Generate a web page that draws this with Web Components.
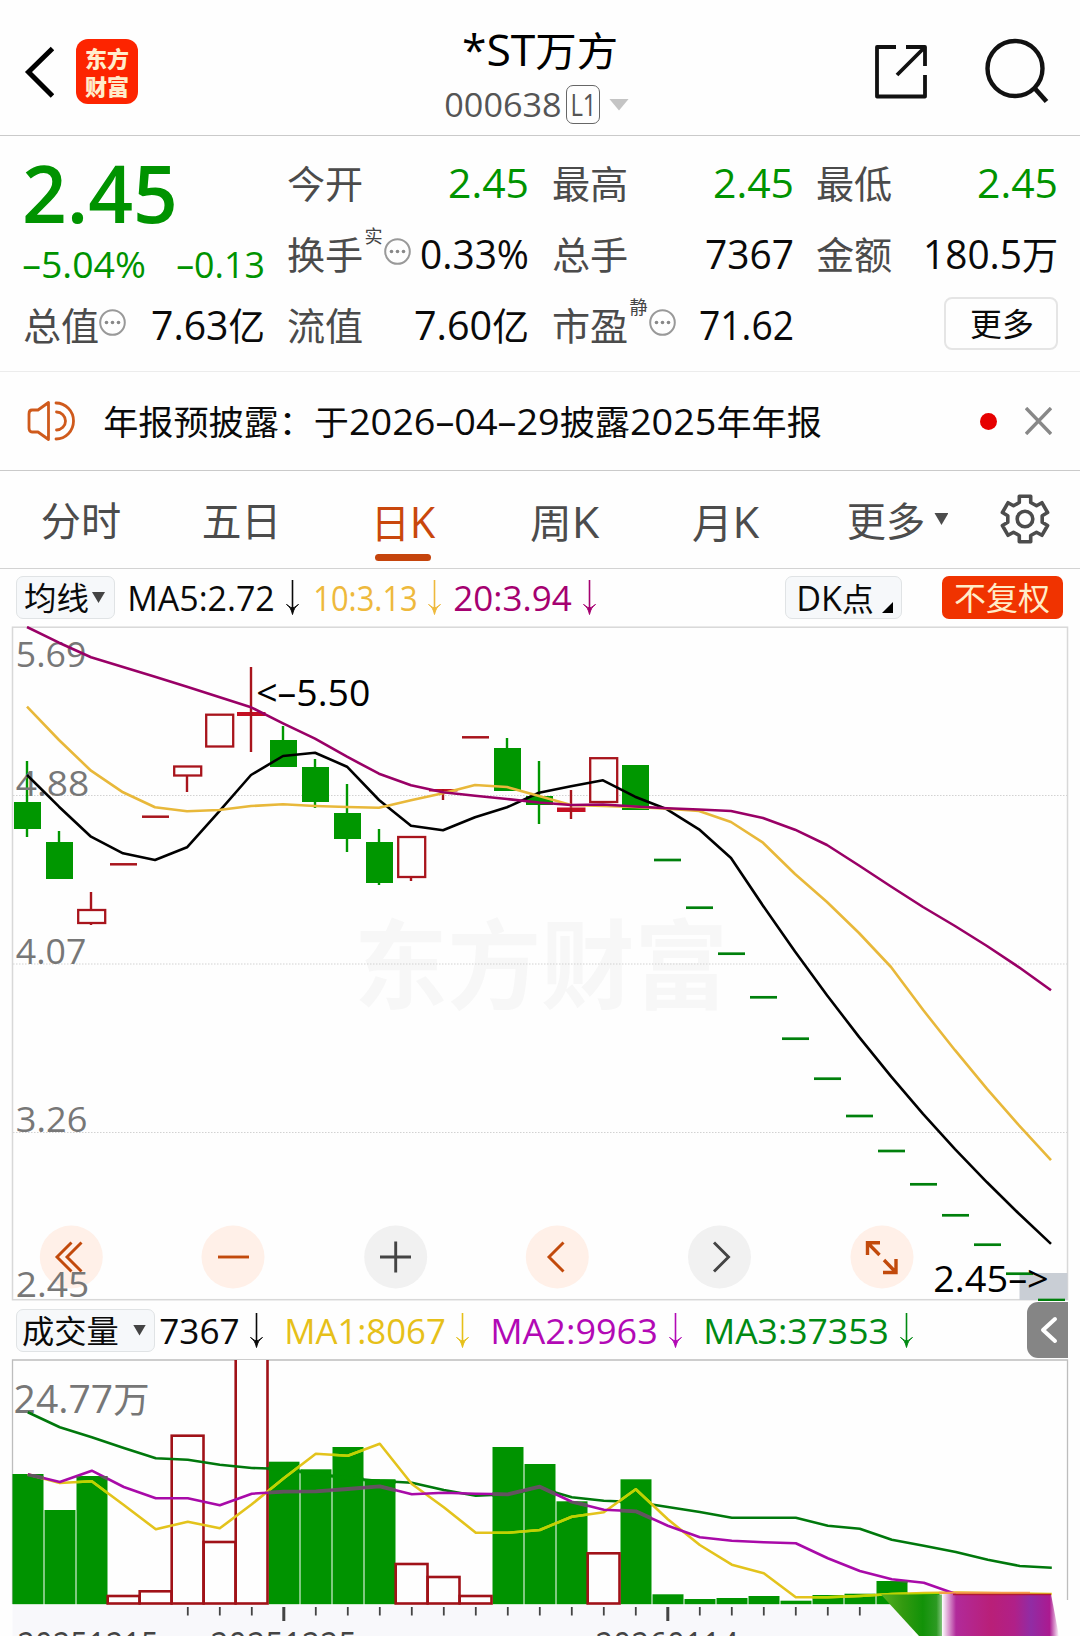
<!DOCTYPE html>
<html lang="zh-CN">
<head>
<meta charset="utf-8">
<title>*ST万方 000638</title>
<style>
html,body{margin:0;padding:0;background:#fefefe}
body{width:1080px;height:1636px;overflow:hidden;font-family:"Open Sans","Noto Sans CJK SC",sans-serif;color:#0a0a0a}
</style>
</head>
<body>
<stock-page></stock-page>
<script>
const FONT = '"Open Sans","Noto Sans CJK SC",sans-serif';
const define = (name, css, html) => customElements.define(name, class extends HTMLElement {
  constructor() {
    super();
    this.attachShadow({mode: 'open'}).innerHTML = `<style>${css}</style>` + (typeof html === 'function' ? html(this) : html);
  }
});

/* Single-line label: box is the cap height, ink is fitted to the width in w. */
const line = (str, x, base, w, s, extra = '', cjk = .93) => {
  const hasLatin = /[\x20-\x7e–]/.test(str);
  const body = hasLatin
    ? str.replace(/&/g, '&amp;').replace(/</g, '&lt;').replace(/[\u4e00-\u9fff：]+/g, m => `<tspan font-size="${(s * cjk).toFixed(1)}">${m}</tspan>`)
    : str;
  const b = hasLatin ? .05 * s : .03 * s;
  return `<text x="${(x - b).toFixed(1)}" y="${base}" font-size="${s}" textLength="${(w + 2 * b).toFixed(1)}" lengthAdjust="spacingAndGlyphs" ${extra}>${body}</text>`;
};
customElements.define('x-text', class extends HTMLElement {
  connectedCallback() {
    if (this.shadowRoot) return;
    const s = +this.getAttribute('s'), w = +this.getAttribute('w'), h = Math.round(s * .72);
    this.attachShadow({mode: 'open'}).innerHTML =
      `<style>:host{display:block;flex:none;width:${w}px;height:${h}px}svg{display:block;overflow:visible}text{font-family:${FONT};fill:currentColor}</style>
       <svg width="${w}" height="${h}">${line(this.getAttribute('t'), 0, h, w, s)}</svg>`;
  }
});

define('info-dot', ':host{display:block;flex:none;width:27px;height:27px}svg{display:block}',
  `<svg width="27" height="27" fill="none" stroke="#999" stroke-width="2"><circle cx="13.5" cy="13.5" r="12.3"/><g fill="#888" stroke="none"><circle cx="7.5" cy="13.5" r="1.8"/><circle cx="13.5" cy="13.5" r="1.8"/><circle cx="19.5" cy="13.5" r="1.8"/></g></svg>`);

define('down-arrow', ':host{display:block;flex:none;width:13px;height:35px}svg{display:block;overflow:visible}',
  `<svg width="13" height="35"><path d="M6.5 0V32" fill="none" stroke="currentColor" stroke-width="1.6"/><path d="M.5 24.5Q5 27 6.5 34.5Q8 27 12.5 24.5Q8 28 6.5 28Q5 28 .5 24.5Z" fill="currentColor" stroke="currentColor"/></svg>`);

define('caret-down', ':host{display:block;flex:none;width:var(--w,13px);height:var(--h,11px);background:currentColor;clip-path:polygon(0 0,100% 0,50% 100%)}', '');

define('app-header', `
:host{display:flex;height:135px;border-bottom:1px solid #cacaca;align-items:flex-start}
.back{margin:45px 0 0 23px}.logo{margin:39px 0 0 22px;width:62px;height:65px;border-radius:12px;background:#fd2400;color:#ffeccb;display:flex;flex-direction:column;align-items:center;font:900 22px/28px "Noto Sans CJK SC",sans-serif;padding-top:4px;box-sizing:border-box}
.mid{margin-left:308px;width:186px}
.title{margin:35px 0 0 18px;color:#000}.code{display:flex;align-items:center;margin-top:19px;color:#555;height:39px}
.l1{margin-left:6px;width:34px;height:39px;box-sizing:border-box;border:1.5px solid #666;border-radius:7px;display:flex;align-items:center;justify-content:center}
caret-down{--w:20px;--h:12px;color:#c4c4c4;margin-left:9px}
.share{margin:43px 0 0 241px}.search{margin:38px 0 0 55px}svg{display:block;flex:none}`,
`<svg class="back" width="31" height="54" fill="none" stroke="#000" stroke-width="5" stroke-linecap="butt" stroke-linejoin="miter"><path d="M29.500 3.500L5.500 27L29.500 51"/></svg>
<div class="logo"><span>东方</span><span>财富</span></div>
<div class="mid"><x-text class="title" t="*ST万方" s="43" w="152"></x-text>
<div class="code"><x-text t="000638" s="33" w="114"></x-text><span class="l1"><x-text t="L1" s="31" w="23"></x-text></span><caret-down></caret-down></div></div>
<svg class="share" width="56" height="58" fill="none" stroke="#111" stroke-width="3.8" stroke-linejoin="round"><path d="M23 4H4V53.500H52V32M33 4H52V23M51 5L24 32"/></svg>
<svg class="search" width="66" height="68" fill="none" stroke="#111" stroke-width="4.400"><circle cx="31" cy="30.5" r="27.5"/><path d="M50 49.500L62.500 63.500" stroke-width="4.800"/></svg>`);

customElements.define('quote-cell', class extends HTMLElement {
  connectedCallback() {
    if (this.shadowRoot) return;
    const a = n => this.getAttribute(n);
    this.attachShadow({mode: 'open'}).innerHTML = `<style>
      :host{display:flex;align-items:flex-end;height:29px}.l{color:#4b4b4b}.v{margin-left:auto}
      .sup{color:#444;margin:0 1px 26px 3px}info-dot{margin:0 0 4px 1px}</style>
      <x-text class="l" t="${a('label')}" s="38" w="74"></x-text>
      ${a('sup') ? `<x-text class="sup" t="${a('sup')}" s="18" w="17"></x-text>` : ''}${this.hasAttribute('info') ? '<info-dot></info-dot>' : ''}
      <x-text class="v" t="${a('v')}" s="40.5" w="${a('w')}"></x-text>`;
  }
});

define('quote-panel', `
:host{display:grid;box-sizing:border-box;height:236px;border-bottom:1px solid #ececec;padding:33px 23px 0 23.5px;grid-template-columns:repeat(4,239px);column-gap:25.6px;grid-template-rows:29px 29px 29px;row-gap:42px}
.price{grid-row:1/3;color:#009300}.big{margin:-3px 0 0 2px;font-weight:600}.chg{display:flex;justify-content:space-between;margin-top:29px}
.g{color:#009300}
.more{justify-self:end;width:114px;height:53px;box-sizing:border-box;border:2px solid #e5e5e5;border-radius:8px;display:flex;align-items:center;justify-content:center;margin:-14px -2px 0 0;padding:2px 0 0 2px}`,
`<div class="price"><x-text class="big" t="2.45" s="79" w="148"></x-text><div class="chg"><x-text t="–5.04%" s="36.5" w="120"></x-text><x-text t="–0.13" s="36.5" w="85"></x-text></div></div>
<quote-cell class="g" label="今开" v="2.45" w="77"></quote-cell><quote-cell class="g" label="最高" v="2.45" w="77"></quote-cell><quote-cell class="g" label="最低" v="2.45" w="77"></quote-cell>
<quote-cell label="换手" sup="实" info v="0.33%" w="105"></quote-cell><quote-cell label="总手" v="7367" w="85"></quote-cell><quote-cell label="金额" v="180.5万" w="131"></quote-cell>
<quote-cell label="总值" info v="7.63亿" w="110"></quote-cell><quote-cell label="流值" v="7.60亿" w="111"></quote-cell><quote-cell label="市盈" sup="静" info v="71.62" w="91"></quote-cell>
<div class="more"><x-text t="更多" s="32" w="62"></x-text></div>`);

define('notice-bar', `
:host{display:flex;align-items:center;box-sizing:border-box;height:99px;border-bottom:1px solid #cacaca;padding:0 28px 0 27px}
x-text{margin:2px 0 0 30px}.dot{margin:0 28px 0 auto;width:17px;height:17px;border-radius:50%;background:#e60000}svg{display:block}`,
`<svg width="48" height="42" fill="none" stroke="#cf5a1c" stroke-width="2.8" stroke-linejoin="round" stroke-linecap="round"><path d="M21.500 2.500V39.500L11 32H5Q2 32 2 28V14Q2 10 5 10H11ZM29 3A17.500 18 0 0 1 29 39M29.500 12A9 9 0 0 1 29.500 30"/></svg>
<x-text t="年报预披露：于2026–04–29披露2025年年报" s="36.5" w="715"></x-text>
<span class="dot"></span><svg width="27" height="28" stroke="#888" stroke-width="3.4"><path d="M1 1L26 27M26 1L1 27"/></svg>`);

const gear = (() => {
  const p = [];
  for (let k = 0; k < 6; k++) for (const [d, r] of [[-19, 17.5], [-14, 23.5], [14, 23.5], [19, 17.5]]) {
    const t = (-90 + 60 * k + d) * Math.PI / 180;
    p.push((26 + r * Math.cos(t)).toFixed(1) + ',' + (26 + r * Math.sin(t)).toFixed(1));
  }
  return p.join(' ');
})();
define('period-tabs', `
:host{display:flex;box-sizing:border-box;height:98px;border-bottom:1px solid #d3d3d3;color:#4c4c4c}
.tab{width:161.3px;flex:none;display:flex;flex-direction:column;align-items:center;padding-top:36px;box-sizing:border-box}
.tab:first-child{margin-left:-2px}.on{color:#c9470c}.on i{width:56px;height:6.5px;border-radius:4px;background:#c5440c;margin-top:16px}
.more{flex-direction:row;align-items:flex-start;justify-content:flex-start;padding-left:42px}caret-down{--w:14px;--h:12px;margin:6px 0 0 10px}
svg{display:block;margin:22px 0 0 31px}`,
`<div class="tab"><x-text t="分时" s="40" w="78"></x-text></div><div class="tab"><x-text t="五日" s="40" w="77"></x-text></div>
<div class="tab on"><x-text t="日K" s="43" w="60"></x-text><i></i></div><div class="tab"><x-text t="周K" s="43" w="65"></x-text></div>
<div class="tab"><x-text t="月K" s="43" w="63"></x-text></div><div class="tab more"><x-text t="更多" s="40" w="76"></x-text><caret-down></caret-down></div>
<svg width="52" height="52" fill="none" stroke="#4c4c4c" stroke-width="3.6" stroke-linejoin="round"><polygon points="${gear}"/><circle cx="26" cy="26" r="7.800"/></svg>`);

const chip = `.chip{box-sizing:border-box;height:43px;background:#f6f8fa;border:1.5px solid #e0e3e5;border-radius:7px;display:flex;align-items:center;flex:none}caret-down{color:#444}x-text{position:relative;top:1px}`;
define('ma-legend', `
:host{display:flex;align-items:center;height:57px;box-sizing:border-box;padding:0 16px}${chip}
.avg{width:99px;padding-left:8px}.avg caret-down{margin-left:4px}.y{color:#eeb93c}.p{color:#a50070}
.dk{width:117px;margin-left:189px;padding-left:12px}.dk i{align-self:flex-end;width:11px;height:11px;background:#000;clip-path:polygon(100% 0,100% 100%,0 100%);margin:0 0 5px 10px}
.adj{margin-left:39.500px;width:121px;height:43px;border-radius:7px;background:#f03300;color:#ffecc8;display:flex;align-items:center;justify-content:center}`,
`<div class="chip avg"><x-text t="均线" s="32" w="63"></x-text><caret-down></caret-down></div>
<x-text style="margin-left:14px" t="MA5:2.72" s="34" w="144"></x-text><down-arrow style="margin-left:13px"></down-arrow>
<x-text class="y" style="margin-left:16px" t="10:3.13" s="34" w="101"></x-text><down-arrow class="y" style="margin-left:12px"></down-arrow>
<x-text class="p" style="margin-left:14px" t="20:3.94" s="34" w="115"></x-text><down-arrow class="p" style="margin-left:13px"></down-arrow>
<div class="chip dk"><x-text t="DK点" s="34" w="74"></x-text><i></i></div><div class="adj"><x-text t="不复权" s="32" w="94"></x-text></div>`);

define('volume-legend', `
:host{display:flex;align-items:center;height:58px;box-sizing:border-box;padding-left:16px}${chip}
.vol{width:139px;padding-left:6px}.vol caret-down{margin-left:15px}.y{color:#e6c019}.p{color:#b209b5}.g{color:#008a12}
.fold{margin-left:114px;width:40.500px;height:56px;border-radius:11px 0 0 11px;background:#858585;display:flex;align-items:center;justify-content:center;padding-left:3px;box-sizing:border-box}`,
`<div class="chip vol"><x-text t="成交量" s="32" w="95"></x-text><caret-down></caret-down></div>
<x-text style="margin-left:6px" t="7367" s="35.5" w="77"></x-text><down-arrow style="margin-left:12px"></down-arrow>
<x-text class="y" style="margin-left:23px" t="MA1:8067" s="35.5" w="158"></x-text><down-arrow class="y" style="margin-left:12px"></down-arrow>
<x-text class="p" style="margin-left:23px" t="MA2:9963" s="35.5" w="164"></x-text><down-arrow class="p" style="margin-left:13px"></down-arrow>
<x-text class="g" style="margin-left:23px" t="MA3:37353" s="35.5" w="182"></x-text><down-arrow class="g" style="margin-left:13px"></down-arrow>
<div class="fold"><svg width="18" height="28" fill="none" stroke="#fff" stroke-width="4" stroke-linecap="round" stroke-linejoin="round"><path d="M15 3L3 14L15 25"/></svg></div>`);

const X = i => 27 + 32 * i;
const poly = (ys, color, extra = '', dx = 0) => `<polyline points="${ys.map((y, i) => X(i) + dx + ',' + y).join(' ')}" fill="none" stroke="${color}" stroke-width="2.6" stroke-linejoin="round" ${extra}/>`;

define('k-chart', `:host{display:block;height:675px}svg{display:block}text{font-family:${FONT}}`, () => {
  const G = '#009700', R = '#a8141c';
  /* kind, body top, body bottom, wick top, wick bottom */
  const c = [['g',802,829,761,837],['g',842,879,831],['r',910,923,892,925],['d',864.3],['d',816.7],['r',766.5,775.5,0,792],['r',714.7,746.5],['x',712,716,667,752],
    ['g',740,767,726],['g',767,802,759,808],['g',813,839,784,852],['g',842,883,829,885],['r',837,877,0,881],['x',789,791.5,0,800],['d',737.3],['g',748,791,738],
    ['g',796,805,761,824],['x',807.5,812,790,819],['r',758.2,802],['g',765,810]];
  let s = '';
  c.forEach(([k, t, b, wt, wb], i) => {
    const x = X(i), col = k === 'g' ? G : R;
    if (wt) s += `<path d="M${x} ${wt}V${t}" stroke="${col}" stroke-width="2.400"/>`;
    if (wb) s += `<path d="M${x} ${b}V${wb}" stroke="${col}" stroke-width="2.400"/>`;
    if (k === 'g') s += `<rect x="${x - 13}" y="${t}" width="27" height="${b - t}" fill="${G}"/>`;
    if (k === 'r') s += `<rect x="${x - 12.800}" y="${t}" width="27" height="${b - t}" fill="#fefefe" stroke="${R}" stroke-width="2.300"/>`;
    if (k === 'x') s += `<rect x="${x - 14}" y="${t}" width="28.500" height="${b - t}" fill="#c40f22"/><path d="M${x} ${t}V${b}" stroke="${R}" stroke-width="2.400"/>`;
    if (k === 'd') s += `<path d="M${x - 13} ${t}h27" stroke="${R}" stroke-width="2.500"/>`;
  });
  const dash = [860,907.7,953.7,997.3,1038.7,1078.7,1116,1151,1184.3,1215.3,1244.7,1273.7,1300].map((y, i) => `<path d="M${X(20 + i) - 13} ${y}h27" stroke="#00800c" stroke-width="2.700"/>`).join('');
  const ma5 = [775,806.7,836.7,853.3,860,847.3,811.7,775,756,752.7,766.7,800,825.7,830.3,817.3,807.3,792.7,786.3,780.3,796.7,809.3,829.3,858,905.7,951.5,995.2,1036.9,1076.4,1113.8,1149.1,1182.3,1213.8,1243.9];
  const ma10 = [706.7,740,770.7,792.3,807.3,811.3,810,806,804.3,806,807,807.7,800.3,793.3,785,787,796,805,806,807,808.7,811,822,842.7,874,902,933,967,1009.8,1050.2,1088.8,1125.3,1160.2];
  const ma20 = [627,642.7,657.3,667,676.7,686.7,697,707.3,723.3,738.7,756.7,773.7,785.3,792.3,795.7,799,802.5,805,804.5,806.5,808.3,809.5,811,818,829.7,845,865.5,886.5,907,926,946,967.3,990.3];
  const circ = [['#fff0e8',71.3],['#fff0e8',233],['#f1f1f1',395.7],['#fff0e8',557.3],['#f1f1f1',719.5],['#fff0e8',882]].map(([f, x]) => `<circle cx="${x}" cy="1257" r="31.500" fill="${f}"/>`).join('');
  return `<svg width="1080" height="675" viewBox="0 626 1080 675">
  <text x="354" y="1001" font-size="97" font-weight="700" fill="#f7f7f7" textLength="374" lengthAdjust="spacingAndGlyphs">东方财富</text>
  <path d="M13 795.500H1067M13 964H1067M13 1132.500H1067" stroke="#d2d2d2" stroke-width="1.200" stroke-dasharray="1.500 1.500"/>
  <rect x="12.500" y="627.200" width="1055" height="672.500" fill="none" stroke="#d8d8d8" stroke-width="1.500"/>
  ${circ}
  <g fill="none" stroke="#c24a0c" stroke-width="2.900"><path d="M71.500 1242.500L57 1257L71.500 1271.500M81.500 1242.500L67 1257L81.500 1271.500"/><path d="M218 1257H249"/><path d="M563.500 1242.500L549 1257L563.500 1271.500"/>
  <path d="M880 1242.800H867.500V1255M868 1243.300L879.500 1255M883 1272.500H896V1259M895.500 1272L884 1260" stroke-width="3.400"/>
  <path d="M380 1257H411M395.700 1241.500V1272.500M714 1242.500L728.500 1257L714 1271.500" stroke="#444"/></g>
  <rect x="1019.500" y="1273" width="48" height="27" fill="#c9ced5"/>
  ${s}${dash}
  <g fill="#777">${line('5.69', 17.5, 667.2, 67, 35)}${line('4.88', 17.5, 796, 70, 35)}${line('4.07', 17.5, 964, 67, 35)}${line('3.26', 17.5, 1132.2, 68, 35)}${line('2.45', 17.5, 1296.5, 70, 35)}</g>
  ${poly(ma5, '#000')}${poly(ma10, '#e8b83a')}${poly(ma20, '#990066')}
  <g fill="#000">${line('<–5.50', 258, 705.5, 110.500, 36)}${line('2.45–>', 935, 1292, 112, 36)}</g></svg>`;
});

define('volume-chart', `:host{display:block;height:277px}svg{display:block}text{font-family:${FONT}}`, () => {
  const v = [['g',1474],['g',1510],['g',1476],['r',1596],['r',1591.3],['r',1435.7],['r',1542],['r',1350],['g',1461.7],['g',1469.3],['g',1447],['g',1479.3],['r',1564],['r',1577],['r',1596],
    ['g',1447],['g',1464],['g',1501.3],['r',1553.3],['g',1479.3],['g',1594.3],['g',1599],['g',1598],['g',1596],['g',1600.7],['g',1595],['g',1593.7],['g',1581],['g',1593]];
  let green = '', red = '';
  v.forEach(([k, y], i) => {
    const x = 12.5 + 32 * i;
    if (k === 'g') green += `<rect x="${x}" y="${y}" width="31" height="${1604.2 - y}"/>`;
    else red += `<rect x="${x - .8}" y="${y}" width="31.800" height="${1603.5 - y}"/>`;
  });
  let ticks = '';
  for (let i = 5; i <= 26; i++) { const m = i === 8 || i === 20; ticks += `<path d="M${27.8 + 32 * i} 1607V${m ? 1621 : 1615.5}" stroke="#444" stroke-width="${m ? 3 : 1.800}"/>`; }
  const y5 = [1474.3,1483,1481.3,1505,1529.3,1521.7,1528.3,1504.3,1478.3,1453.7,1455.7,1443.7,1484,1507.3,1532.7,1532.7,1530,1516.7,1512.3,1489.3,1519.3,1545,1564.7,1573.3,1597.3,1597.3,1596,1594,1593,1592.5,1593,1593.5,1594];
  const y10 = [1474.3,1482,1470.7,1487,1498.3,1498.3,1505.3,1493.7,1491.7,1491.3,1489,1486.3,1494.3,1492.7,1493.7,1494.3,1486.7,1501.7,1509.7,1511.3,1525.7,1537.3,1540.7,1542.3,1543.3,1558.3,1571,1579.3,1582.7,1594];
  const y20 = [1412.3,1427.3,1437.3,1448,1458.3,1459.7,1464.7,1468,1469,1474,1478,1481,1482.7,1490,1495.7,1494.3,1488,1497.3,1500.7,1502,1507,1512,1517.7,1517.7,1517.7,1525.7,1528.7,1539.7,1545.7,1552,1559.7,1566,1567.7];
  return `<svg width="1080" height="277" viewBox="0 1359 1080 277">
  <defs><clipPath id="bars">${green}</clipPath><clipPath id="plot"><rect x="0" y="1360" width="1080" height="276"/></clipPath>
  <linearGradient id="gg" gradientUnits="userSpaceOnUse" x1="882" y1="0" x2="950" y2="0"><stop offset="0" stop-color="#55b020"/><stop offset=".3" stop-color="#339a10"/><stop offset=".6" stop-color="#129208"/><stop offset=".8" stop-color="#2c9a22"/><stop offset="1" stop-color="#fefefe"/></linearGradient>
  <linearGradient id="pp" gradientUnits="userSpaceOnUse" x1="942" y1="0" x2="1059" y2="0"><stop offset="0" stop-color="#fefefe"/><stop offset=".12" stop-color="#b12a9a"/><stop offset=".42" stop-color="#b91f78"/><stop offset=".62" stop-color="#b02088"/><stop offset=".76" stop-color="#912ca4"/><stop offset=".92" stop-color="#ab1a90"/><stop offset="1" stop-color="#fefefe"/></linearGradient></defs>
  <rect x="12.500" y="1605" width="900" height="31" fill="#f8f8fb"/>
  <path d="M12.500 1604V1360H1067.500V1600" fill="none" stroke="#bdbdbd" stroke-width="1.300"/>
  <g fill="#009300">${green}</g><g fill="#fefefe" stroke="#a01218" stroke-width="2.600" clip-path="url(#plot)">${red}</g>
  <g fill="#777">${line('24.77万', 15.5, 1412.5, 132, 39)}</g>
  ${poly(y20, '#00780c', '', .8)}${poly(y20, '#009300', 'clip-path="url(#bars)" style="stroke-width:4px"', .8)}${poly(y5, '#e3c31c', '', .8)}${poly(y10, '#a80aa8', '', .8)}${poly(y5, '#bcd400', 'clip-path="url(#bars)"', .8)}${poly(y10, '#62545f', 'clip-path="url(#bars)" style="stroke-width:3.800px"', .8)}
  ${ticks}
  <g fill="#444" font-weight="500">${line('20251215', 19, 1657, 138, 34)}${line('20251225', 212, 1657, 143, 34)}${line('20260114', 597, 1657, 140, 34)}</g>
  <path d="M881 1594.500H950V1636H919Z" fill="url(#gg)"/>
  <path d="M942 1594H1051L1059 1636H942Z" fill="url(#pp)"/><path d="M939 1592.800H1030" stroke="#f79a4c" stroke-width="2"/><path d="M953 1594.500H1051" stroke="#b01838" stroke-width="1.500"/></svg>`;
});

define('stock-page', ':host{display:flex;flex-direction:column;width:1080px;height:1636px;overflow:hidden;background:#fefefe}',
`<app-header></app-header><quote-panel></quote-panel><notice-bar></notice-bar><period-tabs></period-tabs><ma-legend></ma-legend><k-chart></k-chart><volume-legend></volume-legend><volume-chart></volume-chart>`);
</script>
</body>
</html>
